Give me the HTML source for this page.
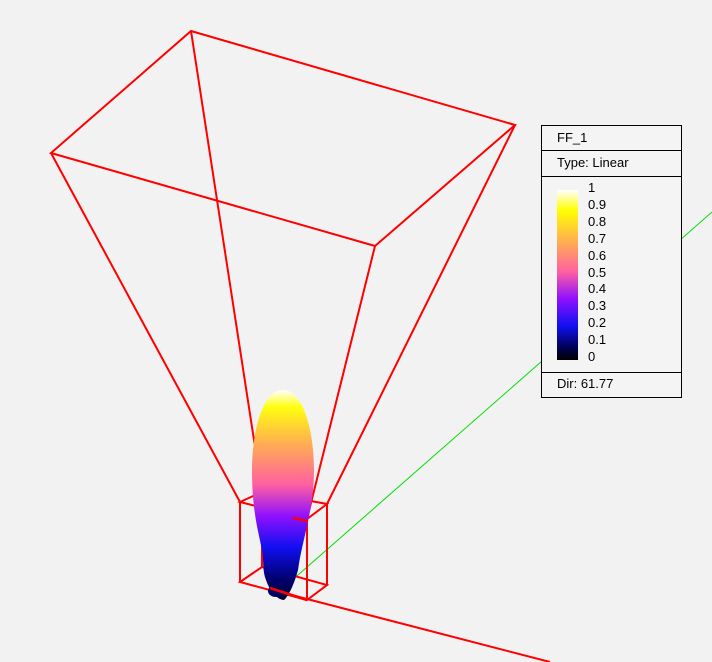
<!DOCTYPE html>
<html><head><style>
html,body{margin:0;padding:0;background:#f2f2f2;width:712px;height:662px;overflow:hidden}
svg{position:absolute;left:0;top:0}
.lg{position:absolute;left:541px;top:125px;width:139px;height:271px;border:1px solid #000;background:#f4f4f4;font-family:"Liberation Sans",sans-serif;font-size:13px;color:#000}
.r{position:absolute;left:0;width:139px;border-bottom:1px solid #000}
.t{position:absolute;left:15px;font-size:13px}
</style></head><body>
<svg width="712" height="662" viewBox="0 0 712 662">
<defs>
<linearGradient id="g" x1="0" y1="390" x2="0" y2="600" gradientUnits="userSpaceOnUse">
<stop offset="0" stop-color="#ffffff"/>
<stop offset="0.08" stop-color="#ffff10"/>
<stop offset="0.25" stop-color="#ffb050"/>
<stop offset="0.45" stop-color="#ff60a0"/>
<stop offset="0.6" stop-color="#9010ff"/>
<stop offset="0.75" stop-color="#1010f0"/>
<stop offset="0.9" stop-color="#000070"/>
<stop offset="1" stop-color="#000030"/>
</linearGradient>
</defs>
<line x1="290" y1="582" x2="712" y2="212" stroke="#00e000" stroke-width="1"/>
<g stroke="#ff0000" stroke-width="2" fill="none">
<polygon points="191,31 515,125 375,246 51,153"/>
<line x1="51" y1="153" x2="240" y2="502"/>
<line x1="191" y1="31" x2="262" y2="492"/>
<line x1="515" y1="125" x2="327" y2="504"/>
<line x1="375" y1="246" x2="307" y2="519"/>
<polygon points="240,502 262,492 327,504 307,519"/>
<polygon points="240,582 262,567 327,585 307,600"/>
<line x1="240" y1="502" x2="240" y2="582"/>
<line x1="262" y1="492" x2="262" y2="567"/>
<line x1="327" y1="504" x2="327" y2="585"/>
<line x1="307" y1="519" x2="307" y2="600"/>
<line x1="280" y1="592" x2="550" y2="662"/>
</g>
<path d="M283,390 C303,390 314,430 314,470 C314,510 302,540 298,570 C294,585 288,597 284,600 C278,600 270,592 266,580 C262,570 264,560 262,550 C258,530 252,510 252,470 C252,430 263,390 283,390 Z" fill="url(#g)"/>
<ellipse cx="276" cy="591" rx="8" ry="6" fill="#000060"/>
<g stroke="#ff0000" stroke-width="2.5">
<line x1="293" y1="518" x2="308" y2="521"/>
<line x1="270" y1="588" x2="307" y2="600"/>
</g>
</svg>
<div class="lg">
<div class="r" style="top:0;height:24px"><span class="t" style="top:4px">FF_1</span></div>
<div class="r" style="top:25px;height:25px"><span class="t" style="top:4px">Type: Linear</span></div>
<div style="position:absolute;left:15px;top:64px;width:21px;height:170px;background:linear-gradient(#ffffff,#ffff00 12%,#ffb050 30%,#ff60a0 48%,#9010ff 64%,#1010f0 80%,#000050 93%,#000000)"></div>
<div style="position:absolute;left:46px;top:54px;font-size:13px;line-height:16.9px">1<br>0.9<br>0.8<br>0.7<br>0.6<br>0.5<br>0.4<br>0.3<br>0.2<br>0.1<br>0</div>
<div style="position:absolute;left:0;top:246px;width:139px;border-top:1px solid #000"></div>
<span class="t" style="top:250px">Dir: 61.77</span>
</div>
</body></html>
